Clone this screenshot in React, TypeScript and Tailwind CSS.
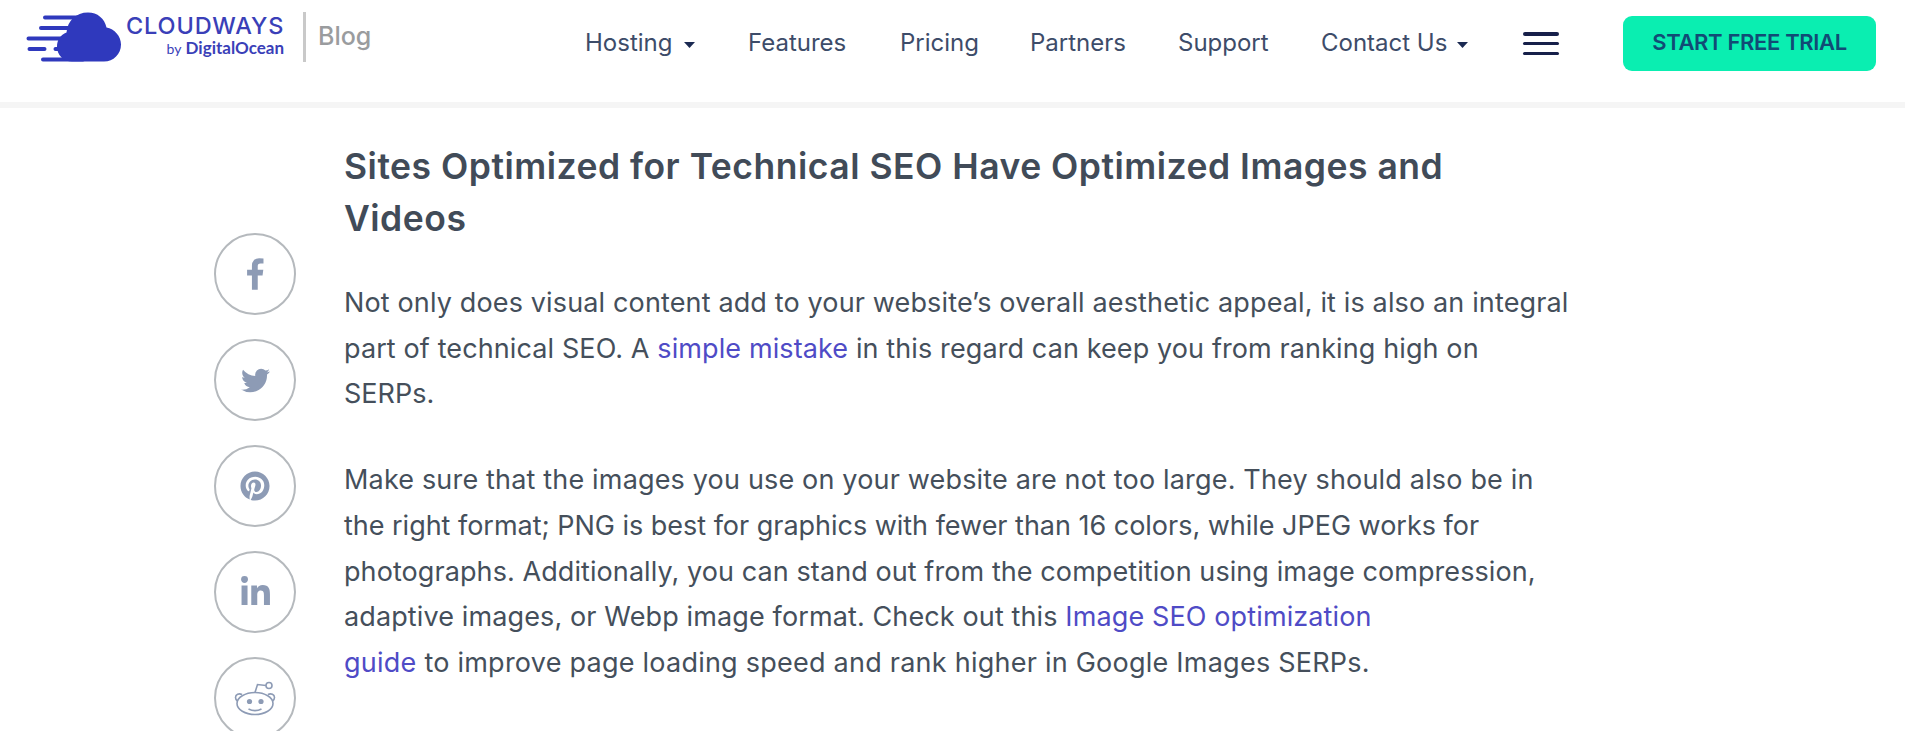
import type { ReactNode, SVGProps } from "react";
import { FaLinkedinIn, FaPinterest } from "react-icons/fa";

const NAV_ITEMS = [
	{ label: "Hosting", className: "w-[163px] gap-3", menu: true },
	{ label: "Features", className: "w-[152px]" },
	{ label: "Pricing", className: "w-[130px]" },
	{ label: "Partners", className: "w-[148px]" },
	{ label: "Support", className: "w-[143px]" },
	{ label: "Contact Us", className: "w-[202px] gap-2.5", menu: true },
];

function CloudwaysMark(props: SVGProps<SVGSVGElement>) {
	return (
		<svg viewBox="0 0 96 50" fill="#2f39bd" aria-hidden="true" {...props}>
			<g stroke="#2f39bd" strokeWidth="4" strokeLinecap="round">
				<path d="M19 5.5h38M15 16h35M2.500 26.500H40M3.500 37h15M29.500 37H40M17 47.500h40" />
			</g>
			<path d="M46 49.500C37.500 49.500 31 43 31 34.500c0-6.500 3.500-11.500 9.500-14C41.500 8.500 50 .5 62 .5c9.500 0 16.500 6 18.500 15C88.500 17 95 24 95 32.500c0 9.500-7.500 17-17 17Z" />
		</svg>
	);
}

function Caret() {
	return (
		<svg viewBox="0 0 11 6" className="mt-1 h-1.5 w-[11px]" fill="#1b2a52" aria-hidden="true">
			<path d="M0 0h11L5.500 6Z" />
		</svg>
	);
}

function FacebookIcon() {
	return (
		<svg viewBox="0 0 1792 1792" className="size-[34px]" fill="currentColor" aria-hidden="true">
			<path d="M1343 76v264h-157q-86 0-116 36t-30 108v189h293l-39 296h-254v759h-306v-759h-255v-296h255v-218q0-186 104-288.500t277-102.500q147 0 228 12z" />
		</svg>
	);
}

function TwitterIcon() {
	return (
		<svg viewBox="0 0 1792 1792" className="size-[33px]" fill="currentColor" aria-hidden="true">
			<path d="M1684 408q-67 98-162 167 1 14 1 42 0 130-38 259.500t-115.500 248.500-184.500 210.500-258 146-323 54.500q-271 0-496-145 35 4 78 4 225 0 401-138-105-2-188-64.500t-114-159.500q33 5 61 5 43 0 85-11-112-23-185.500-111.500t-73.500-205.500v-4q68 38 146 41-66-44-105-115t-39-154q0-88 44-163 121 149 294.500 238.500t371.500 99.500q-8-38-8-74 0-134 94.500-228.500t228.500-94.500q140 0 236 102 109-21 205-78-37 115-142 178 93-10 186-50z" />
		</svg>
	);
}

function RedditIcon() {
	return (
		<svg viewBox="0 0 42 36" className="h-9 w-[42px]" fill="none" stroke="currentColor" strokeWidth="1.600" aria-hidden="true">
			<ellipse cx="21" cy="23.500" rx="18" ry="11" />
			<path d="M8 14.500c-3-1.500-6.500 0-6.500 3 0 1.500.800 2.700 2 3.500M34 14.500c3-1.500 6.500 0 6.500 3 0 1.500-.800 2.700-2 3.500" />
			<path d="M21 12.500 23.500 4.500l8.500 1" />
			<circle cx="35" cy="5.500" r="3" />
			<path d="M14.500 29c4 2 9 2 13 0" />
			<circle cx="15.500" cy="21.500" r="2.600" fill="currentColor" stroke="none" />
			<circle cx="27" cy="21.500" r="2.600" fill="currentColor" stroke="none" />
		</svg>
	);
}

function ShareButton({ label, children }: { label: string; children: ReactNode }) {
	return (
		<a
			aria-label={label}
			className="flex size-[82px] shrink-0 items-center justify-center rounded-full border-2 border-[#b5b9bd] text-[#8d9bb5]"
		>
			{children}
		</a>
	);
}

function Link({ children }: { children: ReactNode }) {
	return <a className="text-[#4f4bc6]">{children}</a>;
}

export default function App() {
	return (
		<div className="h-[731px] w-[1905px] overflow-hidden bg-white font-[Inter,sans-serif]">
			<header className="flex h-[108px] items-start border-b-[6px] border-[#f5f5f5]">
				<div className="flex w-[585px] items-start pt-3 pl-[26px]">
					<CloudwaysMark className="h-[50px] w-24 shrink-0" />
					<div className="ml-1 w-[158px] pt-0.5 text-right text-[#3a3fb8]">
						<p className="text-[23.500px] leading-6 font-medium tracking-[0.850px] whitespace-nowrap">CLOUDWAYS</p>
						<p className="font-[Lato,sans-serif] text-[17px] leading-5 font-bold whitespace-nowrap">
							<span className="text-[14px] font-normal">by</span> DigitalOcean
						</p>
					</div>
					<div className="ml-[19px] h-[50px] w-[3px] bg-[#c9c9c9]" />
					<p className="ml-3 pt-2 text-[25px] leading-8 font-medium text-[#9a9c9e]">Blog</p>
				</div>

				<nav className="flex pt-7 text-[24px] leading-[30px] text-[#3d4c69]">
					{NAV_ITEMS.map((item) => (
						<a key={item.label} className={`flex items-center whitespace-nowrap ${item.className}`}>
							{item.label}
							{item.menu && <Caret />}
						</a>
					))}
				</nav>

				<div className="flex w-9 flex-col gap-1.5 pt-8">
					<span className="h-1 rounded-sm bg-[#17204a]" />
					<span className="h-[3px] rounded-sm bg-[#17204a]" />
					<span className="mt-px h-[3px] rounded-sm bg-[#17204a]" />
				</div>

				<button className="mt-4 ml-16 h-[55px] w-[253px] rounded-[9px] bg-[#0aeeb1] pb-0.5 text-[22px] font-semibold tracking-[-0.350px] text-[#114b75]">
					START FREE TRIAL
				</button>
			</header>

			<main className="flex">
				<aside className="flex w-[344px] flex-col gap-6 pt-[125px] pl-[214px]">
					<ShareButton label="Facebook">
						<FacebookIcon />
					</ShareButton>
					<ShareButton label="Twitter">
						<TwitterIcon />
					</ShareButton>
					<ShareButton label="Pinterest">
						<FaPinterest size={30} />
					</ShareButton>
					<ShareButton label="LinkedIn">
						<FaLinkedinIn size={33} />
					</ShareButton>
					<ShareButton label="Reddit">
						<RedditIcon />
					</ShareButton>
				</aside>

				<article className="pt-[33px] whitespace-nowrap text-[#454f5b]">
					<h2 className="text-[35.500px] leading-[52px] font-semibold tracking-[0.500px] text-[#414b58]">
						Sites Optimized for Technical SEO Have Optimized Images and
						<br />
						Videos
					</h2>
					<p className="mt-[35px] text-[27px] leading-[45.700px]">
						<span className="block tracking-[0.140px]">
							Not only does visual content add to your website’s overall aesthetic appeal, it is also an integral
						</span>
						<span className="block tracking-[0.110px]">
							part of technical SEO. A <Link>simple mistake</Link> in this regard can keep you from ranking high on
						</span>
						<span className="block">SERPs.</span>
					</p>
					<p className="mt-10 text-[27px] leading-[45.700px]">
						<span className="block tracking-[0.170px]">
							Make sure that the images you use on your website are not too large. They should also be in
						</span>
						<span className="block tracking-[-0.020px]">
							the right format; PNG is best for graphics with fewer than 16 colors, while JPEG works for
						</span>
						<span className="block tracking-[0.080px]">
							photographs. Additionally, you can stand out from the competition using image compression,
						</span>
						<span className="block tracking-[0.120px]">
							adaptive images, or Webp image format. Check out this <Link>Image SEO optimization</Link>
						</span>
						<span className="block tracking-[0.240px]">
							<Link>guide</Link> to improve page loading speed and rank higher in Google Images SERPs.
						</span>
					</p>
				</article>
			</main>
		</div>
	);
}
